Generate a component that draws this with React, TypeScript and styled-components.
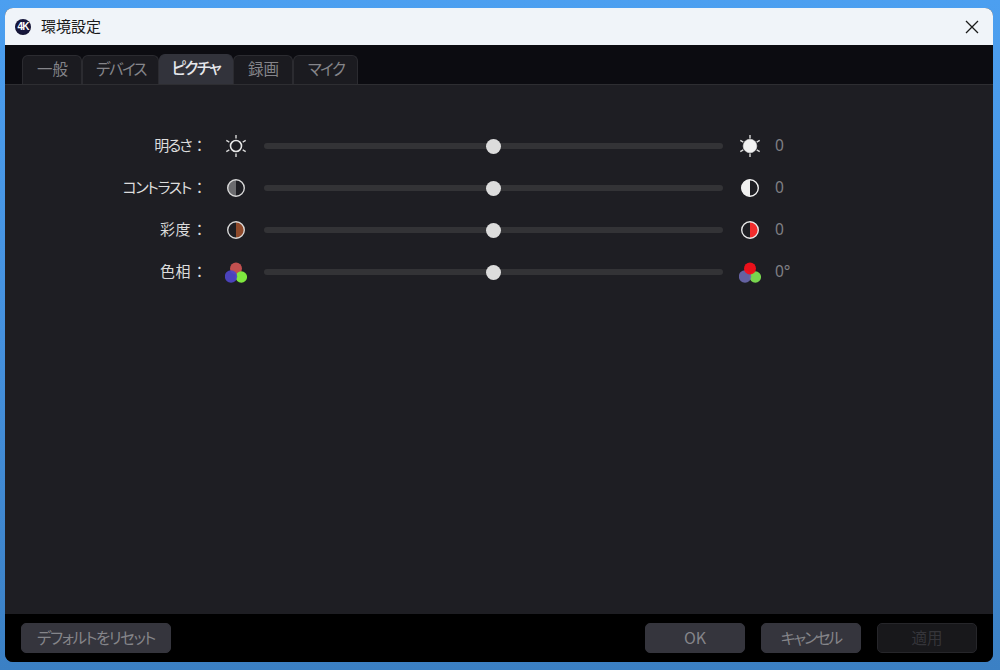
import React from "react"
import styled, { createGlobalStyle } from "styled-components"

const GlobalStyle = createGlobalStyle`
    html, body {
        margin: 0;
        height: 670px;
        overflow: hidden;
    }
    body {
        background: linear-gradient(180deg, #4c9ff0 0%, #4591de 50%, #3b80c4 100%);
        font-family: "Noto Sans CJK JP", "Noto Sans", sans-serif;
        font-feature-settings: "palt";
    }
`

type Row = {
    label: string;
    spacing: number;
    value: string;
    low: React.ReactNode;
    high: React.ReactNode;
}

type TabItem = {
    text: string;
    width: number;
    kana?: boolean;
}

const SunIcon = ({ filled }: { filled?: boolean }) => (
    <svg width="22" height="22" viewBox="0 0 22 22">
        <circle cx="11" cy="11" r={filled ? 6.8 : 5.5} fill={filled ? "#f2f2f2" : "none"} stroke="#e6e6e6" strokeWidth={filled ? 0.6 : 1.6} />
        <path d="M11 0v3.5M11 18.500v3.500M1.300 5.400l3 1.700M17.700 14.900l3 1.700M1.300 16.600l3-1.700M17.700 7.100l3-1.700" stroke="#d8d8d8" strokeWidth="1.400" fill="none" />
    </svg>
)

const HalfIcon = ({ color, ring, side }: { color: string; ring: string; side: "left" | "right" }) => (
    <svg width="22" height="22" viewBox="0 0 22 22">
        <path d={side === "left" ? "M11 2.500a8.500 8.500 0 0 0 0 17z" : "M11 2.500a8.500 8.500 0 0 1 0 17z"} fill={color} />
        <circle cx="11" cy="11" r="8.300" fill="none" stroke={ring} strokeWidth="1.400" />
    </svg>
)

const HueIcon = ({ top, left, right, topLast }: { top: string; left: string; right: string; topLast?: boolean }) => (
    <svg width="22" height="22" viewBox="0 0 22 22">
        {!topLast && <circle cx="11" cy="7.500" r="6" fill={top} />}
        <circle cx="16.300" cy="16" r="5.800" fill={right} />
        <circle cx="6" cy="15.500" r="6.200" fill={left} fillOpacity="0.92" />
        {topLast && <circle cx="11" cy="7.500" r="6" fill={top} fillOpacity="0.95" />}
    </svg>
)

const rows: Row[] = [
    { label: "明るさ", spacing: -1.7, value: "0", low: <SunIcon />, high: <SunIcon filled /> },
    { label: "コントラスト", spacing: -1.4, value: "0", low: <HalfIcon side="left" color="#6b6b6e" ring="#d6d6d6" />, high: <HalfIcon side="left" color="#f0f0f0" ring="#f0f0f0" /> },
    { label: "彩度", spacing: 0.5, value: "0", low: <HalfIcon side="right" color="#8f4a2b" ring="#d6d6d6" />, high: <HalfIcon side="right" color="#f22c2c" ring="#e6e6e6" /> },
    { label: "色相", spacing: 0.5, value: "0°", low: <HueIcon top="#c2504f" left="#4e45c9" right="#7fe83f" />, high: <HueIcon topLast top="#f5101a" left="#6a68ad" right="#78d64e" /> },
]

const tabs: TabItem[] = [
    { text: "一般", width: 60 },
    { text: "デバイス", width: 77, kana: true },
    { text: "ピクチャ", width: 74, kana: true },
    { text: "録画", width: 60 },
    { text: "マイク", width: 65, kana: true },
]

const App: React.FC = () => (
    <>
        <GlobalStyle />
        <Window>
            <TitleBar>
                <Logo>4K</Logo>
                <Title>環境設定</Title>
                <CloseBtn>
                    <svg width="14" height="14" viewBox="0 0 14 14">
                        <path d="M1 1l12 12M13 1L1 13" stroke="#1a1a1a" strokeWidth="1.300" fill="none" />
                    </svg>
                </CloseBtn>
            </TitleBar>
            <TabBar>
                {tabs.map(t => (
                    <Tab key={t.text} $active={t.text === "ピクチャ"} $kana={t.kana} style={{ width: t.width }}>{t.text}</Tab>
                ))}
            </TabBar>
            <Content>
                {rows.map(r => (
                    <SliderRow key={r.label}>
                        <Label>
                            <LabelText $spacing={r.spacing}>{r.label}</LabelText>
                            <Colon>：</Colon>
                        </Label>
                        <IconBox>{r.low}</IconBox>
                        <Track><Thumb /></Track>
                        <IconBox>{r.high}</IconBox>
                        <Value>{r.value}</Value>
                    </SliderRow>
                ))}
            </Content>
            <Footer>
                <Button $wide $spacing={-1.4}>デフォルトをリセット</Button>
                <Spacer />
                <Button $latin>OK</Button>
                <Button $spacing={-2}>キャンセル</Button>
                <Button $disabled>適用</Button>
            </Footer>
        </Window>
    </>
)

const Window = styled.div`
    width: 988px;
    height: 654px;
    margin: 8px 0 0 5px;
    border-radius: 8px;
    overflow: hidden;
    display: flex;
    flex-direction: column;
    background: #1e1e23;
`
const TitleBar = styled.div`
    height: 37px;
    flex: none;
    background: #f0f4f9;
    display: flex;
    align-items: center;
    padding: 0 0 0 10px;
`
const Logo = styled.div`
    width: 16px;
    height: 16px;
    border-radius: 50%;
    background: radial-gradient(circle at 50% 45%, #17173c 55%, #05051a 100%);
    color: #fff;
    font: bold 10px "Liberation Sans", sans-serif;
    display: flex;
    align-items: center;
    justify-content: center;
    letter-spacing: -0.8px;
`
const Title = styled.div`
    margin: 0 0 3px 10px;
    font-size: 15px;
    color: #1a1a1a;
`
const CloseBtn = styled.div`
    margin-left: auto;
    width: 42px;
    height: 37px;
    display: flex;
    align-items: center;
    justify-content: center;
`
const TabBar = styled.div`
    height: 40px;
    flex: none;
    box-sizing: border-box;
    background: #0c0c11;
    border-bottom: 1px solid #2e2e32;
    display: flex;
    align-items: flex-end;
    padding-left: 17px;
`
const Tab = styled.div<{ $active?: boolean; $kana?: boolean }>`
    box-sizing: border-box;
    height: ${p => (p.$active ? "30px" : "29px")};
    border: 1px solid ${p => (p.$active ? "#32333b" : "#2b2b30")};
    border-bottom: none;
    border-radius: 6px 6px 0 0;
    background: ${p => (p.$active ? "#32333b" : "#1b1b20")};
    color: ${p => (p.$active ? "#e6e8ec" : "#85858a")};
    font-size: 15.5px;
    font-weight: ${p => (p.$active ? 500 : 400)};
    letter-spacing: ${p => (p.$kana ? "-1.6px" : "0")};
    display: flex;
    align-items: center;
    justify-content: center;
    padding: ${p => (p.$active ? "0 0 5px 0" : "0 0 4px 1px")};
`
const Content = styled.div`
    flex: 1;
    padding-top: 40px;
    background: #1e1e23;
`
const SliderRow = styled.div`
    height: 42px;
    display: flex;
    align-items: center;
`
const Label = styled.div`
    box-sizing: border-box;
    width: 204px;
    padding-right: 3px;
    margin-bottom: 4px;
    display: flex;
    justify-content: flex-end;
    color: #dcdcdc;
    font-size: 15px;
    white-space: nowrap;
    flex: none;
`
const LabelText = styled.span<{ $spacing: number }>`
    letter-spacing: ${p => p.$spacing}px;
`
const Colon = styled.span`
    width: 14px;
    margin-left: 1px;
    text-align: center;
    font-feature-settings: normal;
`
const IconBox = styled.div`
    width: 22px;
    height: 22px;
    margin: 0 17px 0 16px;
    flex: none;
    display: flex;
`
const Track = styled.div`
    width: 459px;
    height: 6px;
    border-radius: 3px;
    background: #333336;
    position: relative;
    flex: none;
`
const Thumb = styled.div`
    position: absolute;
    left: 222px;
    top: -4px;
    width: 15px;
    height: 15px;
    border-radius: 50%;
    background: #dcdcdc;
`
const Value = styled.div`
    color: #808085;
    font-family: "Noto Sans", sans-serif;
    font-size: 15.5px;
    margin: 0 0 3px -3px;
`
const Footer = styled.div`
    height: 48px;
    flex: none;
    background: #000;
    display: flex;
    align-items: center;
    padding: 0 16px;
    gap: 16px;
`
const Spacer = styled.div`
    flex: 1;
`
const Button = styled.div<{ $wide?: boolean; $disabled?: boolean; $spacing?: number; $latin?: boolean }>`
    box-sizing: border-box;
    width: ${p => (p.$wide ? "150px" : "100px")};
    height: 30px;
    border-radius: 5px;
    background: ${p => (p.$disabled ? "#18181b" : "#35353d")};
    border: 1px solid ${p => (p.$disabled ? "#26262a" : "#35353d")};
    color: ${p => (p.$disabled ? "#35353a" : "#85858a")};
    font-size: ${p => (p.$latin ? "16px" : "15.5px")};
    letter-spacing: ${p => p.$spacing ?? 0}px;
    display: flex;
    align-items: center;
    justify-content: center;
    padding-bottom: 2px;
`

export default App
